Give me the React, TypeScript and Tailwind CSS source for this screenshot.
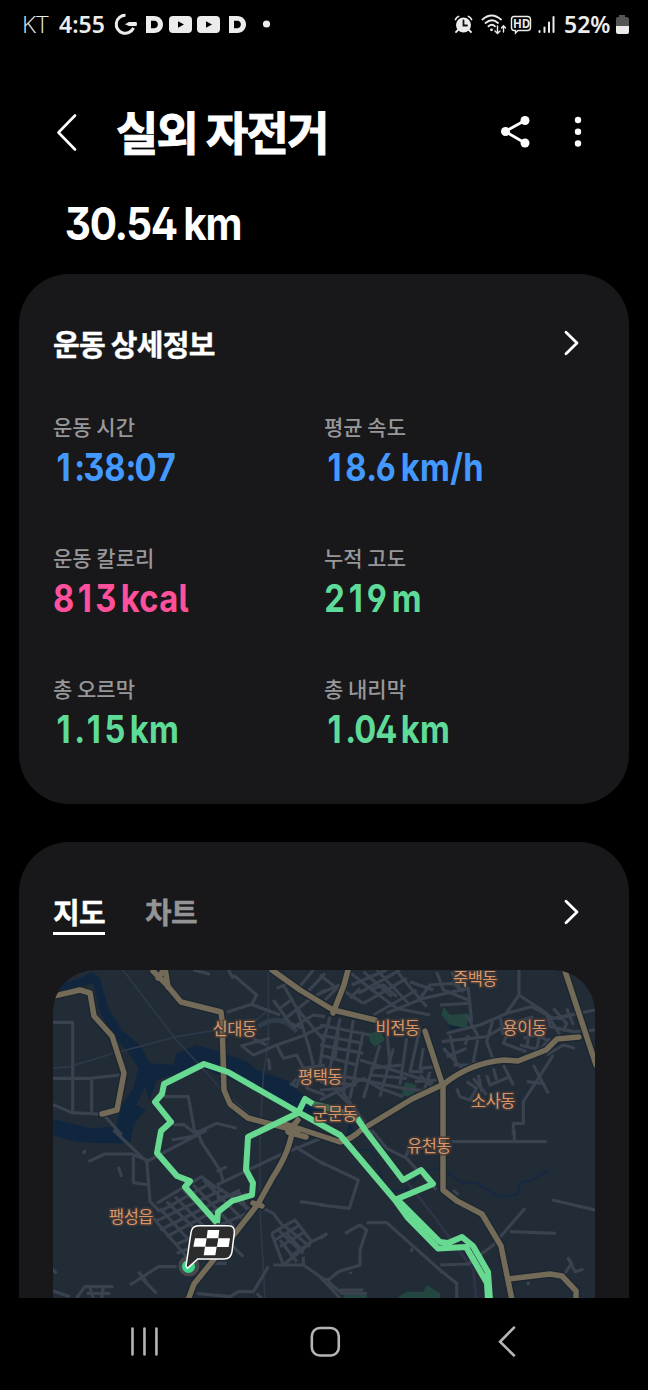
import type { ReactNode } from "react";

const KR = "font-['Noto_Sans_CJK_KR',sans-serif]";
const NUM =
  "font-['Inter',sans-serif] font-bold origin-left whitespace-nowrap [font-feature-settings:'ss01','cv09','cv03','cv04','cv05']";

function StatusBar() {
  return (
    <header className="flex h-12 items-center pl-[22px] pr-[19px] text-[#ececec]">
      <span className="w-[37px] origin-left font-['Open_Sans',sans-serif] text-[24px] font-light leading-none">KT</span>
      <span className="w-[54px] whitespace-nowrap font-['Noto_Sans',sans-serif] text-[23px] font-semibold leading-none">
        4:55
      </span>
      <svg className="h-6 w-[165px]" viewBox="113 12 165 24" fill="#ececec">
        <path d="M125.500 15.300a9 9 0 1 0 8 12.600" fill="none" stroke="#ececec" strokeWidth="3" />
        <path d="M125 24.200l4-2.200h7.500q1 2 0 4h-7.500z" />
        <path d="M146 16h8c12 0 12 17 0 17h-8zM151 20.800v7.400h3.500c4.500 0 4.500-7.400 0-7.400z" fillRule="evenodd" />
        <path d="M173 16h15q4 0 4 4v9q0 4-4 4h-15q-4 0-4-4v-9q0-4 4-4zM178 21.300v6.400l6-3.200z" fillRule="evenodd" />
        <path d="M201 16h15q4 0 4 4v9q0 4-4 4h-15q-4 0-4-4v-9q0-4 4-4zM206 21.300v6.400l6-3.200z" fillRule="evenodd" />
        <path d="M229 16h8c12 0 12 17 0 17h-8zM234 20.800v7.400h3.500c4.500 0 4.500-7.400 0-7.400z" fillRule="evenodd" />
        <circle cx="266.500" cy="24" r="3.600" />
      </svg>
      <svg className="ml-auto h-6 w-[106px]" viewBox="454 12 106 24" fill="none" stroke="#ececec" strokeWidth="1.800" strokeLinecap="round">
        <circle cx="464.500" cy="25" r="7.500" fill="#ececec" stroke="none" />
        <path d="M456.500 19.500q1-2.500 3-3M472.500 19.500q-1-2.500-3-3M459 30l-2 2M470 30l2 2" />
        <path d="M464.500 20.500v5h3.500" stroke="#111" />
        <path d="M483.500 19.500q9-8 18.500 0M486.500 23q6.500-5.500 12.500 0M489.500 26.300q3.500-3 6.500 0" />
        <circle cx="492.500" cy="29.800" r="1.400" fill="#ececec" stroke="none" />
        <path d="M498.500 26v7M496 31l2.500 2.500 2.500-2.500M504.500 32v-6M502.500 28l2-2.200 2 2.200" strokeWidth="1.400" />
        <path d="M515 16.500h13.500q3 0 3 3v8q0 3-3 3H519l-2.500 2.500v-2.500H515q-2.500 0-2.500-3v-8q0-3 2.500-3z" strokeWidth="1.400" />
        <text x="514" y="28" fill="#ececec" stroke="none" fontFamily="Open Sans" fontWeight="700" fontSize="11.500">HD</text>
        <path d="M540.500 31v1M545.500 27.500v4.500M550 22.500v9.500M554.500 17v15" strokeWidth="2" />
      </svg>
      <span className="ml-[5px] w-[51px] whitespace-nowrap font-['Noto_Sans',sans-serif] text-[23px] font-semibold leading-none">
        52%
      </span>
      <svg className="h-6 w-3.5 shrink-0" viewBox="615 12 14 24">
        <path d="M616 26v-7q0-2 2-2h1v-2h6v2h1q3 0 3 2v7z" fill="#555" />
        <path d="M616 26h13v6q0 2-2 2h-9q-2 0-2-2z" fill="#ececec" />
      </svg>
    </header>
  );
}

function Chevron() {
  return (
    <svg className="h-7 w-5" viewBox="0 0 20 28" fill="none" stroke="#fff" strokeWidth="2.800" strokeLinecap="round" strokeLinejoin="round">
      <path d="M4 3.200l11 10.800-11 10.800" />
    </svg>
  );
}

function Digits({ value }: { value: string }) {
  return (
    <>
      {value.split("").map((char, i) => (
        <span key={i} className={/\d/.test(char) ? "inline-block w-[24.600px] text-center" : "inline-block w-[10.500px] text-center"}>
          {char}
        </span>
      ))}
    </>
  );
}

interface StatProps {
  label: string;
  color: string;
  value: string;
  children?: ReactNode;
}

function Stat({ label, color, value, children }: StatProps) {
  return (
    <div className="h-[131px]">
      <div className={`${KR} h-[24px] whitespace-nowrap text-[21px] font-medium leading-[22px] text-[#97979a]`}>{label}</div>
      <div className={`${NUM} ${color} mt-[8px] h-[40px] scale-x-[.86] text-[38px] leading-[40px]`}>
        <Digits value={value} />
        {children && <span className="ml-[5px] tracking-[.400px]">{children}</span>}
      </div>
    </div>
  );
}

const A = "translate(50 965) scale(.33333)";
const B = "translate(320 965) scale(.33333)";
const C = "translate(50 1130) scale(.33333)";
const D = "translate(320 1130) scale(.33333)";

const minorRoads: [string, string][] = [
  [A, "M0 172H68V440M0 340H120L210 330M125 345V440M0 415L65 443L160 448L215 510M340 395H415L435 505L500 475L560 490M370 480L400 478L435 505"],
  [A, "M430 15L480 28M535 15L550 40M550 30L620 90L605 118L530 142M605 118L690 150M660 220L575 242L610 270L680 240L760 212L825 180M610 222L650 240M680 240L700 280L740 270L760 310L825 300M655 280L660 315M725 360L740 340"],
  [A, "M680 70L715 55L760 85M700 60L740 130L825 230M670 105L720 175L760 190M690 130L730 100M700 165L770 110L825 75M740 130L775 240L790 300M725 190L790 150L825 155M790 15L745 70M825 25L760 95M760 310L740 365L720 355M780 310L770 370L825 390"],
  [B, "M0 85L60 60M15 105L50 70L0 30M80 15L150 70L230 130L330 150M95 60L200 15M115 85L240 15M130 115L260 40M160 150L290 75M200 145L310 100L445 70L455 170M130 20L215 95M170 15L270 120M235 25L320 125M270 50L340 75M150 75L190 60L230 95M300 100L330 60L400 55L430 80"],
  [B, "M90 15L75 80L130 115M90 100L120 70M350 20L370 75L445 105M395 20L420 70M360 120L445 115M380 205L480 180L560 145L635 125L700 160L825 135M365 230L500 215L560 180L640 155M440 150L475 215L460 290L500 300M520 160L500 230L520 285M540 150L550 210M570 190L550 235L620 260"],
  [B, "M597 15V90L555 150M597 90L680 145L720 210M680 145L690 185L760 200L825 195M700 130L740 175L730 200M740 130L760 180M710 160L780 145M600 240L660 255L690 220M610 220L650 210L690 230M630 190L620 250M660 195L650 260"],
  [B, "M30 155L10 230L0 300M60 160L30 310M100 165L75 320L70 400M130 200L90 400M0 180L150 210M0 210L130 235M0 240L130 265M0 270L110 300M0 320L250 370L330 380M55 200L45 280M180 240L130 400M220 250L180 395M0 350L110 360M120 285L250 325L340 355"],
  [B, "M0 405L130 340L180 370L250 395M150 310L245 300M150 330L260 340M200 195L210 300M260 220L240 360M300 190L270 320L310 320M310 250L300 310L350 305M330 320L310 385M285 350L350 345M300 330L345 375M370 250L430 315M390 210L410 300M380 275L440 250M400 300L455 300M445 210L435 240"],
  [B, "M0 375L60 370L160 510M40 370L110 440M410 370L420 395L450 405L470 370L440 350M460 340L500 390M475 330L485 380M500 330L510 360L570 335M550 300L580 360M520 310L530 345M640 300L685 385M700 270L610 410V475H580V510M620 350L665 355M680 270L730 240L765 250"],
  [C, "M190 0L290 95L470 0M115 95L165 72H245L290 90L300 215L330 245M250 80V158L295 165M0 410L20 430M0 480L60 500M365 30L450 15M455 35L440 0M450 30L510 120L520 155M500 165L690 75L825 20M530 110L500 125M205 110L215 140M100 72L105 60"],
  [C, "M320 220L455 140L500 175M330 245L480 160M315 275L515 180M330 300L570 180M350 320L590 190M375 345L590 250M310 265L410 380M330 235L430 345M350 215L500 360M375 200L520 350M400 180L545 325M430 165L570 310M460 150L590 280M500 170L610 245M380 370L480 330M500 205L570 190L590 240"],
  [C, "M550 350L580 380M530 400H490M380 410H325L240 465M265 425L290 455M270 440L320 490M80 504L105 470H190M120 475L130 504M160 470L155 504M110 490H180M640 235L670 250L700 290M665 310L735 270L785 335L700 405L665 310M680 295L760 370M700 285L780 350M690 350L765 305M675 330L750 285M720 380L785 335M785 335L825 315"],
  [C, "M670 405H760L825 450M760 410V380M655 410L610 485H565L540 500L440 490M620 490L650 520M750 215L825 225M690 330L740 395M710 310L760 365M735 50L825 105"],
  [D, "M0 95L115 150L88 235L0 225M395 35H680M583 0V35M155 0L200 55L260 85L300 130M255 85L265 60M310 140L350 180M0 325L22 310M75 310L120 285L140 300L120 360V405L55 425L25 450L0 445M140 278H200L360 420L410 460V504"],
  [D, "M360 405L445 402L520 345L615 235M570 305L708 310M697 210L825 240M735 430L755 400L745 385L765 425L790 418M625 455V465M25 455L65 490H140M60 480H110M92 425V432M75 480H130M0 440L60 504M275 355V365M365 420V430M400 180L415 195"],
];

const route =
  "M217 1223L185 1187L190 1181L177 1176L157 1153L161 1131L171 1122L155 1102L162 1094L164 1084L204 1064L228 1072L298 1112L340 1135L395 1200L408 1218L438 1248.500L466 1247L487 1283L488 1300M217 1223L218 1212L232 1201L252 1195L253 1183L246 1170L248 1137L298 1113L305 1099L313 1104M357 1118L365 1130L403 1180L421 1170L433 1184L397 1199L440 1242L448 1243L462 1237L473 1246L488 1272L490 1300";

const places: [string, number, number][] = [
  ["죽백동", 475, 984.5],
  ["신대동", 234.500, 1035],
  ["비전동", 397.500, 1034],
  ["용이동", 524.500, 1034],
  ["평택동", 320, 1083],
  ["군문동", 335, 1119.500],
  ["소사동", 493, 1107],
  ["유천동", 429, 1152],
  ["팽성읍", 131, 1223],
];

function RouteMap() {
  return (
    <svg className="block h-[328px] w-[542px] rounded-t-[42px]" viewBox="53 970 542 328">
      <rect x="53" y="970" width="542" height="328" fill="#212c37" />
      <g fill="#10263f">
        <path transform={A} d="M0 65L90 40L125 22L150 40L175 130L215 195L270 240L300 295L370 300L380 265L440 240L525 265L590 290L620 315L720 350L760 390L820 420L850 455L780 450L650 380L520 335L450 305L370 330L320 345L290 430L250 480L240 535L170 535L90 525L0 500V460L120 490L200 485L210 430L250 370L265 310L230 255L185 210L150 140L130 55L0 90Z" />
        <path transform={C} d="M0 0H250L230 28L150 40L80 35L0 15Z" />
        <path transform={B} d="M385 175L430 185L390 195ZM85 478H98V510H80ZM50 375L70 380L65 400Z" />
      </g>
      <path transform={A} d="M285 365L295 395L310 430L275 430L260 420Z" fill="#212c37" />
      <path transform={D} d="M90 0V60H155L180 125L195 185L260 180L300 130L350 115L380 125L420 155L470 160L540 200L590 195L600 160L640 148L685 122" fill="none" stroke="#152941" strokeWidth="6" />
      <path transform={D} d="M260 155L350 270L460 420L468 504" fill="none" stroke="#303347" strokeWidth="8" />
      <g fill="#244640">
        <path transform={B} d="M370 125L390 150L445 145L440 190L390 180L365 150ZM145 205L180 198L195 225L165 245L150 230ZM255 350L290 360L280 400L245 390Z" />
        <path transform={D} d="M75 490L140 488L140 510H65ZM235 500L260 485L310 485L320 465L360 490V510H235Z" />
      </g>
      <g fill="none" stroke="#2d3849" strokeWidth="5">
        <path transform={A} d="M215 10L375 220L530 390L650 490M0 310L60 305L180 268L380 215L530 190L620 165L660 130M655 15V230L640 330L630 510" />
        <path transform={C} d="M630 0V240L645 504" />
      </g>
      <path transform={A} d="M625 185Q690 140 740 200" fill="none" stroke="#303c4b" strokeWidth="14" />
      <g fill="none" stroke="#39424e" strokeWidth="9.500" strokeLinejoin="round">
        {minorRoads.map(([tile, d]) => (
          <path key={d} transform={tile} d={d} />
        ))}
      </g>
      {[
        ["#1b2630", 8],
        ["#736b58", 5.500],
      ].map(([stroke, width]) => (
        <g key={stroke} fill="none" stroke={stroke} strokeWidth={width} strokeLinejoin="round" strokeLinecap="round">
          <path d="M50 997L80 990L90 993L94 1016L112 1036L124 1073L117 1110L102 1114" />
          <path d="M153 971L166 984L181 1002L221 1012L222 1020L224 1090L230 1104L248 1118L298 1131" />
          <path d="M158 978L165 968L168 987M285 1124L340 1142Q352 1139 361 1130L412 1099L444 1084Q470 1063 504 1060L518 1061L546 1050L557 1039L579 1037" />
          <path d="M272 970L300 990L333 1010L375 1020M348 970L344 985L333 1013M425 1031L443 1086V1190L457 1201L482 1214L501 1246L512 1300" />
          <path d="M564 968L596 1065M293 1125Q291 1150 273 1177L258 1204L236 1232L194 1284L188 1300M508 1279L550 1274L562 1276L576 1291V1300" />
          <path d="M298 1120L288 1132L306 1137M253 1203L262 1206" />
        </g>
      ))}
      <path d="M313 1104Q336 1109 357 1118" fill="none" stroke="#467456" strokeWidth="6" />
      <path d={route} fill="none" stroke="#67d990" strokeWidth="6" strokeLinejoin="round" />
      <g
        className="font-['Noto_Sans_CJK_KR',sans-serif]"
        fontSize="16.500"
        textAnchor="middle"
        fill="#d99668"
        stroke="#493b36"
        strokeOpacity=".7"
        strokeWidth="3.500"
        paintOrder="stroke"
        strokeLinejoin="round"
        letterSpacing="-.5"
      >
        {places.map(([name, x, y]) => (
          <text key={name} x={x} y={y}>{name}</text>
        ))}
      </g>
      <circle cx="189" cy="1266" r="10.500" fill="#47494a" />
      <circle cx="188.500" cy="1266.500" r="6.500" fill="#3bd78c" />
      <path
        transform={C}
        d="M445 287H535Q555 287 553 308L546 365Q543 387 522 387H443L412 415L408 408L423 308Q426 287 445 287Z"
        fill="#2c2c2d"
        stroke="#fff"
        strokeWidth="4.500"
        strokeLinejoin="round"
      />
      <path
        transform={C}
        d="M473 300H508L505 325H540L536 351H500L496 376H461L465 350H430L435 325H470ZM470 325L466 350H501L505 325Z"
        fill="#fff"
        fillRule="evenodd"
      />
    </svg>
  );
}

export default function App() {
  return (
    <div className="flex h-[1390px] w-[648px] flex-col overflow-hidden bg-black text-white">
      <StatusBar />
      <div className="flex h-[148px] items-center pt-[20px]">
        <svg className="ml-[54px] h-10 w-6" viewBox="0 0 24 40" fill="none" stroke="#fff" strokeWidth="2.600" strokeLinecap="round" strokeLinejoin="round">
          <path d="M21 3.500L4.500 20.500L21 37.500" />
        </svg>
        <h1 className={`${KR} -mt-1 ml-[38px] whitespace-nowrap text-[46px] font-bold leading-[52px] tracking-[-1.700px] [-webkit-text-stroke:1px_white]`}>실외 자전거</h1>
        <svg className="ml-auto h-10 w-8" viewBox="500 112 32 40" fill="#fff">
          <path d="M525 120.500L505 131.500L525 143" fill="none" stroke="#fff" strokeWidth="2.800" />
          <circle cx="525" cy="120.500" r="4.500" />
          <circle cx="505.500" cy="131.500" r="4.500" />
          <circle cx="525" cy="143" r="4.500" />
        </svg>
        <svg className="ml-[38px] mr-[62px] h-10 w-4" viewBox="570 112 16 40" fill="#fff">
          <circle cx="578" cy="120" r="3.200" />
          <circle cx="578" cy="131.800" r="3.200" />
          <circle cx="578" cy="143.500" r="3.200" />
        </svg>
      </div>
      <div className={`${NUM} h-[78px] shrink-0 scale-x-[.9] pl-[72px] pt-[2px] text-[45px] leading-[52px] tracking-[-1.500px]`}>
        30.54<span className="ml-[10px]"> </span><span className="-ml-[12px]">km</span>
      </div>

      <section className="mx-[19px] h-[530px] shrink-0 rounded-[50px] bg-[#18181a] px-[34px] pt-[49px]">
        <div className="flex h-10 items-center justify-between pr-[13px]">
          <h2 className={`${KR} text-[29px] font-bold leading-10 tracking-[-.700px] [-webkit-text-stroke:.4px_white]`}>운동 상세정보</h2>
          <Chevron />
        </div>
        <div className="mt-[52px] grid grid-cols-[271px_271px]">
          <Stat label="운동 시간" color="text-[#4399ff]" value="1:38:07" />
          <Stat label="평균 속도" color="text-[#4399ff]" value="18.6">km/h</Stat>
          <Stat label="운동 칼로리" color="text-[#ff509b]" value="813">kcal</Stat>
          <Stat label="누적 고도" color="text-[#5edb98]" value="219">m</Stat>
          <Stat label="총 오르막" color="text-[#5edb98]" value="1.15">km</Stat>
          <Stat label="총 내리막" color="text-[#5edb98]" value="1.04">km</Stat>
        </div>
      </section>

      <section className="mx-[19px] mt-[38px] h-[456px] shrink-0 rounded-t-[50px] bg-[#18181a] px-[34px] pt-[50px]">
        <div className="flex h-[78px] items-start pr-[13px]">
          <div className="h-[43px] w-[52px] border-b-[3px] border-white">
            <div className={`${KR} whitespace-nowrap text-[29px] font-bold leading-[38px] tracking-[-.800px] [-webkit-text-stroke:.4px_white]`}>지도</div>
          </div>
          <div className={`${KR} ml-10 whitespace-nowrap text-[29px] font-bold leading-[38px] tracking-[-.800px] text-[#949496] [-webkit-text-stroke:.4px_#949496]`}>차트</div>
          <div className="ml-auto mt-[6px]"><Chevron /></div>
        </div>
        <RouteMap />
      </section>

      <nav className="flex h-[92px] shrink-0 items-center pb-1 pl-[130px] pr-[130px]">
        <svg className="h-9 w-[389px]" viewBox="130 1324 389 36" fill="none" stroke="#b5b5b5" strokeWidth="2.600" strokeLinecap="round">
          <path d="M132.500 1328.500v26M144.500 1328.500v26M156.500 1328.500v26" />
          <rect x="312.300" y="1328" width="27" height="27.500" rx="8" />
          <path d="M515 1327.500L501 1341.800L515 1355.500" />
        </svg>
      </nav>
    </div>
  );
}
